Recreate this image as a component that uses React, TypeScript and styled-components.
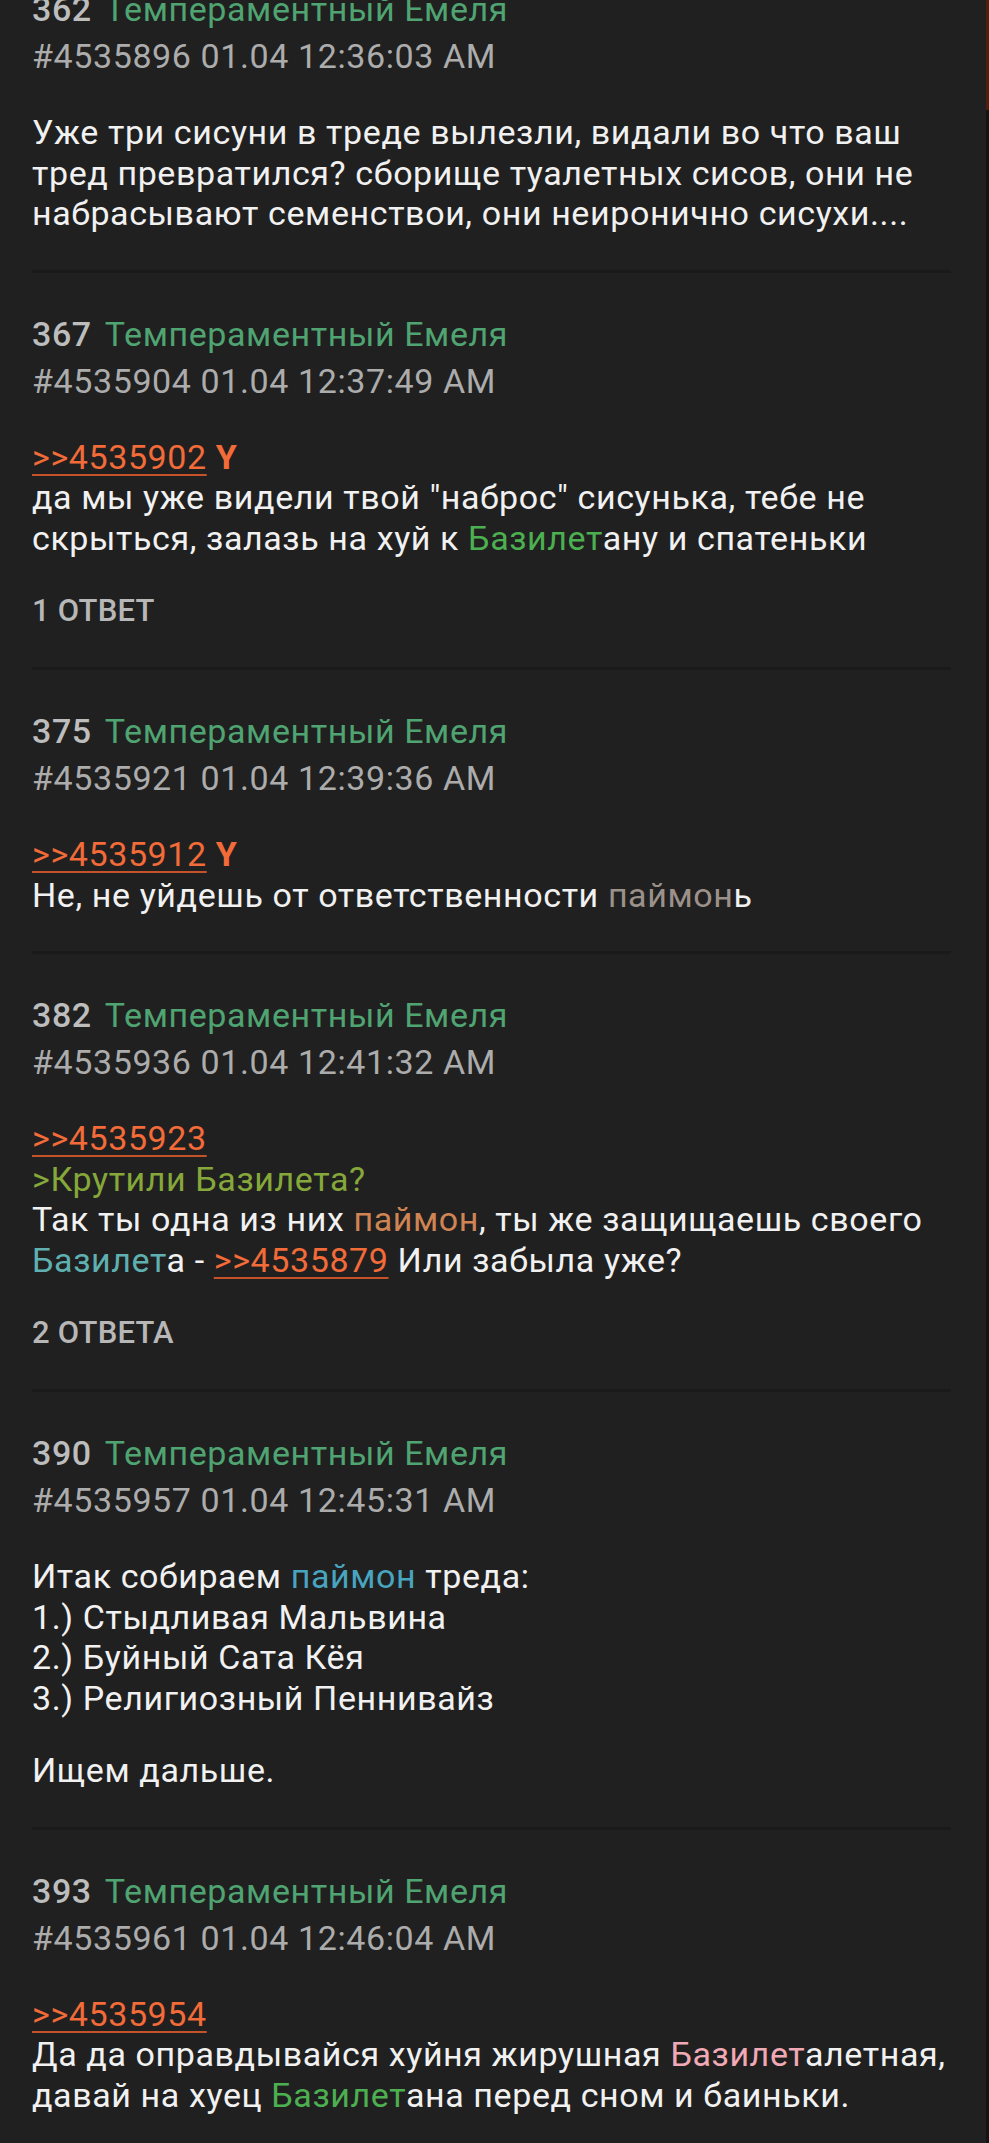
import React from 'react';
import styled, { createGlobalStyle } from 'styled-components';

const GlobalStyle = createGlobalStyle`
  html, body {
    margin: 0;
    padding: 0;
    background: #202020;
  }
  body {
    font-family: Roboto, "Noto Sans", "Liberation Sans", sans-serif;
    -webkit-font-smoothing: antialiased;
  }
`;

const Screen = styled.div`
  display: flex;
  height: 2143px;
  overflow: hidden;
  background: #202020;
`;

const Feed = styled.div`
  flex: 1;
  min-width: 0;
  margin-top: -52px;
  padding: 0 35px 0 32px;
`;

const ScrollTrack = styled.div`
  width: 3px;
  display: flex;
  flex-direction: column;
  background: #141414;
`;

const ScrollThumb = styled.div`
  height: 110px;
  background: #4f1e0d;
`;

const Post = styled.article`
  padding: 41px 0 36px;
  border-bottom: 3px solid #1a1a1a;
  font-size: 34px;
  letter-spacing: 0.6px;
`;

const Header = styled.div`
  display: flex;
  align-items: baseline;
  gap: 13px;
  line-height: 41px;
`;

const Num = styled.span`
  font-weight: 500;
  color: #bdbdbd;
`;

const Name = styled.span`
  color: #4fa472;
`;

const Meta = styled.div`
  margin-top: 6px;
  line-height: 41px;
  color: #acacac;
`;

const Body = styled.div`
  margin-top: 35px;
  line-height: 40.5px;
  color: #f1f1f1;
`;

const Paragraph = styled.p<{ $gap?: boolean }>`
  margin: ${({ $gap }) => ($gap ? '32px 0 0' : '0')};
`;

const QuoteLink = styled.a`
  color: #f26b38;
  text-decoration: underline;
  text-decoration-color: #c4532a;
  text-decoration-thickness: 2px;
  text-underline-offset: 5px;
`;

const You = styled.span`
  color: #f26b38;
  font-weight: 700;
`;

const GreenText = styled.div`
  color: #86a83a;
`;

const Hl = styled.span<{ $color: string }>`
  color: ${({ $color }) => $color};
`;

const Replies = styled.div`
  margin-top: 32px;
  line-height: 41px;
  font-size: 31px;
  letter-spacing: 0.2px;
  font-weight: 500;
  color: #b7b7b7;
`;

type PostProps = {
  num: number;
  id: string;
  time: string;
  replies?: string;
  children: React.ReactNode;
};

function PostItem({ num, id, time, replies, children }: PostProps) {
  return (
    <Post>
      <Header>
        <Num>{num}</Num>
        <Name>Темпераментный Емеля</Name>
      </Header>
      <Meta>
        #{id} 01.04 {time}
      </Meta>
      <Body>{children}</Body>
      {replies && <Replies>{replies}</Replies>}
    </Post>
  );
}

export default function App() {
  return (
    <Screen>
      <GlobalStyle />
      <Feed>
        <PostItem num={362} id="4535896" time="12:36:03 AM">
          Уже три сисуни в треде вылезли, видали во что ваш тред превратился? сборище туалетных
          сисов, они не набрасывают семенствои, они неиронично сисухи....
        </PostItem>

        <PostItem num={367} id="4535904" time="12:37:49 AM" replies="1 ОТВЕТ">
          <div>
            <QuoteLink>&gt;&gt;4535902</QuoteLink> <You>Y</You>
          </div>
          да мы уже видели твой "наброс" сисунька, тебе не скрыться, залазь на хуй к{' '}
          <Hl $color="#4caf50">Базилет</Hl>ану и спатеньки
        </PostItem>

        <PostItem num={375} id="4535921" time="12:39:36 AM">
          <div>
            <QuoteLink>&gt;&gt;4535912</QuoteLink> <You>Y</You>
          </div>
          Не, не уйдешь от ответственности <Hl $color="#9c918a">паймон</Hl>ь
        </PostItem>

        <PostItem num={382} id="4535936" time="12:41:32 AM" replies="2 ОТВЕТА">
          <div>
            <QuoteLink>&gt;&gt;4535923</QuoteLink>
          </div>
          <GreenText>&gt;Крутили Базилета?</GreenText>
          Так ты одна из них <Hl $color="#cf8454">паймон</Hl>, ты же защищаешь своего{' '}
          <Hl $color="#5fb0b0">Базилет</Hl>а - <QuoteLink>&gt;&gt;4535879</QuoteLink> Или забыла
          уже?
        </PostItem>

        <PostItem num={390} id="4535957" time="12:45:31 AM">
          <Paragraph>
            Итак собираем <Hl $color="#48a4bf">паймон</Hl> треда:
            <br />
            1.) Стыдливая Мальвина
            <br />
            2.) Буйный Сата Кёя
            <br />
            3.) Религиозный Пеннивайз
          </Paragraph>
          <Paragraph $gap>Ищем дальше.</Paragraph>
        </PostItem>

        <PostItem num={393} id="4535961" time="12:46:04 AM">
          <div>
            <QuoteLink>&gt;&gt;4535954</QuoteLink>
          </div>
          Да да оправдывайся хуйня жирушная <Hl $color="#f2a9b6">Базилет</Hl>алетная, давай на
          хуец <Hl $color="#4caf50">Базилет</Hl>ана перед сном и баиньки.
        </PostItem>
      </Feed>
      <ScrollTrack>
        <ScrollThumb />
      </ScrollTrack>
    </Screen>
  );
}
